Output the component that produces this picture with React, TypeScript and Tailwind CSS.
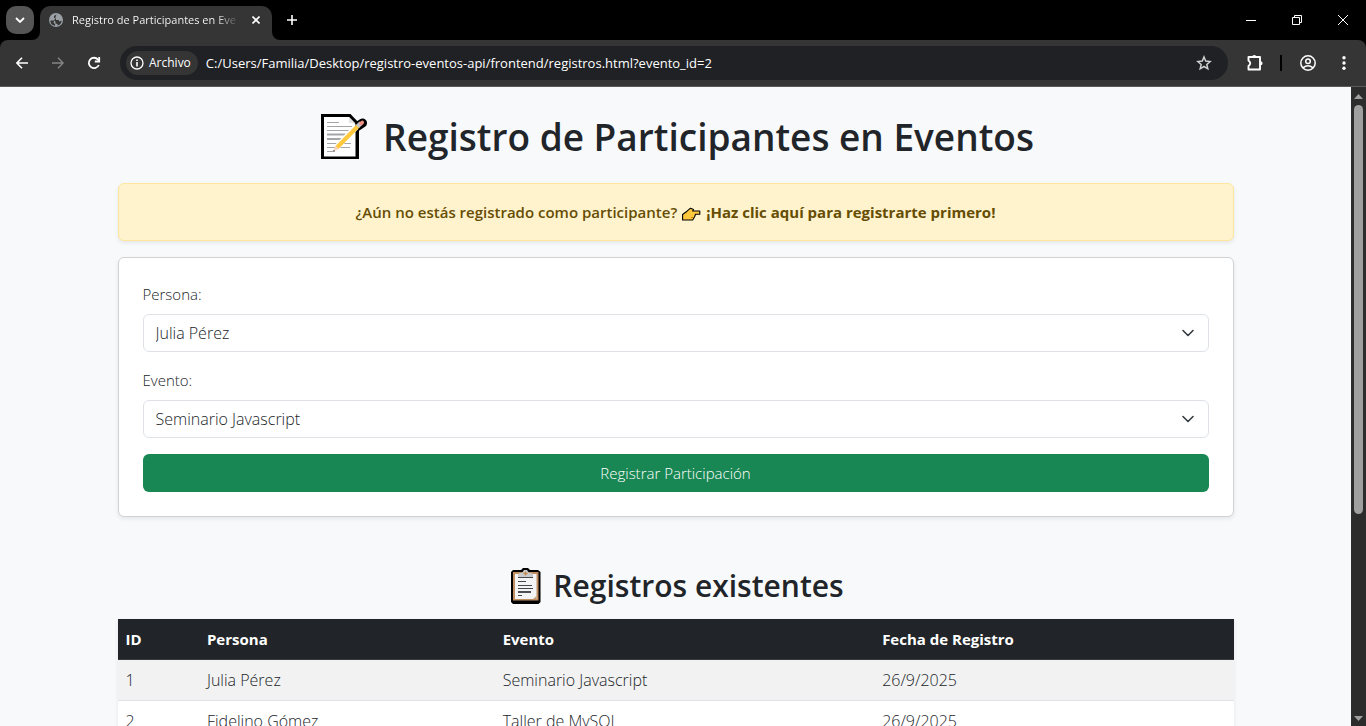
import React from "react";

const registros = [
  { id: 1, persona: "Julia Pérez", evento: "Seminario Javascript", fecha: "26/9/2025" },
  { id: 2, persona: "Fidelino Gómez", evento: "Taller de MySQL", fecha: "26/9/2025" },
];

function MemoIcon() {
  return (
    <svg viewBox="0 0 46 46" className="h-[46px] w-[46px] shrink-0" aria-hidden="true">
      <path d="M34 14L41.500 9" stroke="#000" strokeWidth="9" strokeLinecap="round" />
      <path d="M0 0H29.500L38 9V45H0Z" fill="#000" />
      <path d="M3 3H28L34.500 10V42.500H3Z" fill="#fff" />
      <path d="M28 3V9H34Z" fill="#e3e3e3" />
      <path d="M6 8.500H18M6 12.500H31M6 16.500H29M6 20.500H27M6 24.500H25M6 29.500H30M6 33.500H29M6 37.500H14" stroke="#a3a5a7" strokeWidth="1.200" />
      <path d="M6 20.500H27M6 25H24" stroke="#a3a5a7" strokeWidth="2" />
      <path d="M35 13L15 34" stroke="#fff" strokeWidth="6" />
      <path d="M37 12L16 33.500" stroke="#ffc83d" strokeWidth="4.200" />
      <path d="M14.200 31.700L17.800 35L12 37.600Z" fill="#f6d6c0" />
      <path d="M12.600 36L12 37.600L14 36.800Z" fill="#444" />
      <path d="M36.500 12.500L40 9" stroke="#c4c6c8" strokeWidth="4.400" />
      <path d="M40 9.500L41.300 8.500" stroke="#f08f83" strokeWidth="3.600" strokeLinecap="round" />
    </svg>
  );
}

function ClipboardIcon() {
  return (
    <svg viewBox="0 0 30 36" className="h-9 w-[30px] shrink-0" aria-hidden="true">
      <path d="M2 2H10L12 0H17L19 2H27L29.500 4V34L27.500 36H2L0 34V4Z" fill="#000" />
      <path d="M2 4H27.500V32.500H2Z" fill="#bf8f62" />
      <path d="M4 6H25.500V31H4Z" fill="#f4f4f4" />
      <path d="M22 31L25.500 28V31Z" fill="#c5a27e" />
      <path d="M7 9V6L9 5H11L13 2H16L18 5H20L22 6V9Z" fill="#c9cbcc" />
      <path d="M14.500 3.500V7.500M12.500 5.500H16.500" stroke="#c2884c" strokeWidth="1.300" />
      <path d="M7 9.500H22M7 13.500H15M7 17.500H21M7 20.500H22M7 24H20M7 27.500H11" stroke="#45484b" strokeWidth="1" />
      <path d="M7 24H20" stroke="#45484b" strokeWidth="1.800" />
    </svg>
  );
}

function PointingIcon() {
  return (
    <svg viewBox="0 0 19 14" className="mt-1 h-[14px] w-[19px] shrink-0" aria-hidden="true">
      <path d="M.6 7.500L5 4.200L8.500 1.200L11.500 2.500L10.700 4H17.800V7.200H13.500L12.500 10L10.700 13H.6Z" fill="#ffc83d" stroke="#000" strokeWidth="1.100" strokeLinejoin="round" />
      <path d="M9 10.500H11" stroke="#d67d00" strokeWidth="1" />
    </svg>
  );
}

function GlobeIcon() {
  return (
    <svg viewBox="0 0 14 14" className="h-[14px] w-[14px] shrink-0" aria-hidden="true">
      <circle cx="7" cy="7" r="7" fill="#9aa0a6" />
      <path d="M7.500 1.500L5 3V5L7 5.500V7H9.500L10.500 8.500L12.600 7.500C12.600 10 11 12 8.500 12.600L8.600 11L6.500 10.500V8.600L5 7.500H1.500L1.400 8.500C1.800 11 3.500 12.500 6 12.700L6.200 11.500L4.500 9.500Z" fill="#353535" />
    </svg>
  );
}

function TabStrip() {
  return (
    <div className="flex h-10 items-center bg-black text-white">
      <button aria-label="Buscar pestañas" className="ml-1.5 flex h-7 w-7 items-center justify-center rounded-[10px] bg-[#555]">
        <svg viewBox="0 0 10 6" className="h-1.5 w-2.5" fill="none" stroke="#fff" strokeWidth="1.8"><path d="M1 1L5 5L9 1" /></svg>
      </button>
      <svg viewBox="0 0 8 8" className="-ml-0.5 h-2 w-2 self-end" aria-hidden="true"><path d="M8 0V8H0A8 8 0 0 0 8 0Z" fill="#353535" /></svg>
      <div className="flex h-[34px] w-[232px] items-center self-end rounded-t-[10px] bg-[#353535] pb-1.5 pl-[9px] pr-2.5">
        <GlobeIcon />
        <span className="ml-[9px] min-w-0 flex-1 overflow-hidden whitespace-nowrap bg-linear-to-r from-white from-88% to-[#555] bg-clip-text text-[11px] leading-4 text-transparent">
          Registro de Participantes en Eventos
        </span>
        <button aria-label="Cerrar pestaña" className="ml-3.5 flex h-3 w-3 items-center justify-center">
          <svg viewBox="0 0 8 8" className="h-2 w-2" stroke="#fff" strokeWidth="1.6"><path d="M0.500 0.500L7.500 7.500M7.500 0.500L0.500 7.500" /></svg>
        </button>
      </div>
      <svg viewBox="0 0 8 8" className="h-2 w-2 self-end" aria-hidden="true"><path d="M0 0V8H8A8 8 0 0 1 0 0Z" fill="#353535" /></svg>
      <button aria-label="Nueva pestaña" className="ml-1.5 flex h-3 w-3 items-center justify-center">
        <svg viewBox="0 0 10 10" className="h-2.5 w-2.5" stroke="#fff" strokeWidth="1.6"><path d="M5 0V10M0 5H10" /></svg>
      </button>
      <div className="ml-auto flex h-full">
        <button aria-label="Minimizar" className="flex w-[46px] items-center justify-center">
          <svg viewBox="0 0 10 10" className="h-2.5 w-2.5" stroke="#fff"><path d="M0 5.500H10" /></svg>
        </button>
        <button aria-label="Restaurar" className="flex w-[46px] items-center justify-center">
          <svg viewBox="0 0 10 10" className="h-2.5 w-2.5" fill="none" stroke="#fff"><path d="M.5 2.500H7.500V9.500H.5ZM2.500 2V.5H9.500V7.500H8" /></svg>
        </button>
        <button aria-label="Cerrar" className="flex w-[46px] items-center justify-center">
          <svg viewBox="0 0 10 10" className="h-2.5 w-2.5" stroke="#fff"><path d="M0 0L10 10M10 0L0 10" /></svg>
        </button>
      </div>
    </div>
  );
}

function Toolbar() {
  return (
    <div className="bg-black">
      <div className="flex h-[47px] items-center rounded-t-lg border-b border-[#5a5a5a] bg-[#353535] pl-3 pr-3.5 text-white">
        <button aria-label="Atrás" className="flex h-5 w-5 items-center justify-center">
          <svg viewBox="0 0 12 12" className="h-3 w-3" fill="none" stroke="#fff" strokeWidth="1.6"><path d="M12 6H1M6 .7L.9 6L6 11.300" /></svg>
        </button>
        <button aria-label="Adelante" className="ml-4 flex h-5 w-5 items-center justify-center">
          <svg viewBox="0 0 12 12" className="h-3 w-3" fill="none" stroke="#858585" strokeWidth="1.4"><path d="M0 6H11M6 .7L11.100 6L6 11.300" /></svg>
        </button>
        <button aria-label="Recargar" className="ml-4 flex h-5 w-5 items-center justify-center">
          <svg viewBox="0 0 14 14" className="h-3.5 w-3.5" fill="none" stroke="#fff" strokeWidth="1.8"><path d="M11.800 9A5.200 5.200 0 1 1 11 3.600L12 5" /><path d="M12.200 1V5.500H7.800" /></svg>
        </button>
        <div className="ml-4 flex h-[34px] min-w-0 flex-1 items-center rounded-full bg-[#202124] pl-1.5 pr-4">
          <div className="flex h-6 shrink-0 items-center gap-[5px] rounded-full bg-[#353535] pl-1 pr-[7px]">
            <svg viewBox="0 0 14 14" className="h-3.5 w-3.5" fill="none" stroke="#fff" strokeWidth="1.300"><circle cx="7" cy="7" r="6" /><path d="M7 6V10.500M7 3.500V5" strokeWidth="1.600" /></svg>
            <span className="text-[12px] leading-4">Archivo</span>
          </div>
          <input
            aria-label="Dirección"
            readOnly
            value="C:/Users/Familia/Desktop/registro-eventos-api/frontend/registros.html?evento_id=2"
            className="ml-2 min-w-0 flex-1 bg-transparent text-[13px] leading-5 outline-none"
          />
          <button aria-label="Añadir a marcadores" className="flex h-4 w-4 items-center justify-center">
            <svg viewBox="0 0 16 16" className="h-4 w-4" fill="none" stroke="#d0d0d0" strokeWidth="1.500"><path d="M8 2L9.700 6.100L14.100 6.500L10.800 9.400L11.800 13.800L8 11.500L4.200 13.800L5.200 9.400L1.900 6.500L6.300 6.100Z" /></svg>
          </button>
        </div>
        <button aria-label="Extensiones" className="ml-[18px] flex h-[18px] w-[18px] items-center justify-center">
          <svg viewBox="0 0 18 18" className="h-[18px] w-[18px]"><path d="M2.500 3H14V15.500H2.500V12Q6 9.300 2.500 6.500Z" fill="none" stroke="#fff" strokeWidth="1.900" strokeLinejoin="round" /><path d="M6.200 3A2 2 0 0 1 10.300 3ZM14.500 7.200A2.100 2.100 0 0 1 14.500 11.400Z" fill="#fff" /></svg>
        </button>
        <span className="ml-4 h-4 w-0.5 bg-black" />
        <button aria-label="Perfil" className="ml-[18px] flex h-4 w-4 items-center justify-center">
          <svg viewBox="0 0 16 16" className="h-4 w-4" fill="none" stroke="#fff" strokeWidth="1.500"><circle cx="8" cy="8" r="7.200" /><circle cx="8" cy="6.200" r="2.300" /><path d="M3 12.800Q8 8.800 13 12.800" /></svg>
        </button>
        <button aria-label="Menú" className="ml-5 flex h-4 w-4 items-center justify-center">
          <svg viewBox="0 0 4 14" className="h-3.5 w-1" fill="#fff"><circle cx="2" cy="1.800" r="1.700" /><circle cx="2" cy="7" r="1.700" /><circle cx="2" cy="12.200" r="1.700" /></svg>
        </button>
      </div>
    </div>
  );
}

function Field({ id, label, options }: { id: string; label: string; options: string[] }) {
  return (
    <div className="mb-4">
      <label htmlFor={id} className="mb-2 block">{label}</label>
      <div className="relative">
        <select id={id} className="h-[38px] w-full appearance-none rounded-md border border-[#dee2e6] bg-white pl-3 pr-9 text-base">
          {options.map((o) => <option key={o}>{o}</option>)}
        </select>
        <svg viewBox="0 0 16 16" className="pointer-events-none absolute right-3 top-[11px] h-4 w-4" fill="none" stroke="#343a40" strokeWidth="1.600" strokeLinecap="round" strokeLinejoin="round" aria-hidden="true"><path d="M2 5.500L7 10.500L12 5.500" /></svg>
      </div>
    </div>
  );
}

function Scrollbar() {
  return (
    <div className="flex w-[15px] shrink-0 flex-col items-center bg-[#2c2c2c]" aria-hidden="true">
      <svg viewBox="0 0 9 5" className="mt-[7px] h-[5px] w-[9px]" fill="#9f9f9f"><path d="M0 5L4.500 0L9 5Z" /></svg>
      <div className="mt-1.5 h-[64%] w-[9px] rounded-full bg-[#9f9f9f]" />
      <svg viewBox="0 0 9 5" className="mb-[5px] mt-auto h-[5px] w-[9px]" fill="#9f9f9f"><path d="M0 0L4.500 5L9 0Z" /></svg>
    </div>
  );
}

export default function App() {
  return (
    <div className="flex h-screen flex-col overflow-hidden font-['Open_Sans','Noto_Sans',sans-serif]">
      <TabStrip />
      <Toolbar />
      <div className="flex min-h-0 flex-1 bg-[#f8f9fa]">
        <main className="min-w-0 flex-1 overflow-hidden text-[15px] font-light leading-6 text-[#212529]">
          <div className="mx-auto max-w-[1140px] px-3 pt-[26px]">
            <h1 className="mb-[22px] flex items-center justify-center gap-4 pl-1 text-[37px] font-semibold leading-[48px]">
              <MemoIcon />
              <span>Registro de Participantes en Eventos</span>
            </h1>
            <div className="mb-4 flex items-center justify-center gap-[5px] rounded-md border border-[#ffe69c] bg-[#fff3cd] p-4 font-semibold text-[#664d03] shadow-[0_2px_4px_rgba(0,0,0,0.075)]">
              <span>¿Aún no estás registrado como participante?</span>
              <PointingIcon />
              <a href="#participante" className="font-bold">¡Haz clic aquí para registrarte primero!</a>
            </div>
            <form onSubmit={(e) => e.preventDefault()} className="mb-[50px] rounded-md border border-[#d0d2d4] bg-white p-6 shadow-[0_2px_4px_rgba(0,0,0,0.075)]">
              <Field id="persona" label="Persona:" options={["Julia Pérez", "Fidelino Gómez"]} />
              <Field id="evento" label="Evento:" options={["Seminario Javascript", "Taller de MySQL"]} />
              <button type="submit" className="block h-[38px] w-full rounded-md bg-[#198754] text-white">Registrar Participación</button>
            </form>
            <h2 className="mb-3.5 flex items-center justify-center gap-3 pl-1 text-[30px] font-semibold leading-[38px]">
              <ClipboardIcon />
              <span>Registros existentes</span>
            </h2>
            <table className="w-full table-fixed border-collapse bg-white text-left shadow-[0_2px_4px_rgba(0,0,0,0.075)]">
              <colgroup>
                <col className="w-[7.3%]" />
                <col className="w-[26.5%]" />
                <col className="w-[34%]" />
                <col />
              </colgroup>
              <thead className="bg-[#212529] font-bold text-white">
                <tr className="border-b border-[#373b3e]">
                  <th className="p-2">ID</th>
                  <th className="p-2">Persona</th>
                  <th className="p-2">Evento</th>
                  <th className="p-2">Fecha de Registro</th>
                </tr>
              </thead>
              <tbody className="text-base">
                {registros.map((r) => (
                  <tr key={r.id} className="border-b border-[#dee2e6] odd:bg-[#f2f2f2]">
                    <td className="p-2">{r.id}</td>
                    <td className="p-2">{r.persona}</td>
                    <td className="p-2">{r.evento}</td>
                    <td className="p-2">{r.fecha}</td>
                  </tr>
                ))}
              </tbody>
            </table>
          </div>
        </main>
        <Scrollbar />
      </div>
    </div>
  );
}
